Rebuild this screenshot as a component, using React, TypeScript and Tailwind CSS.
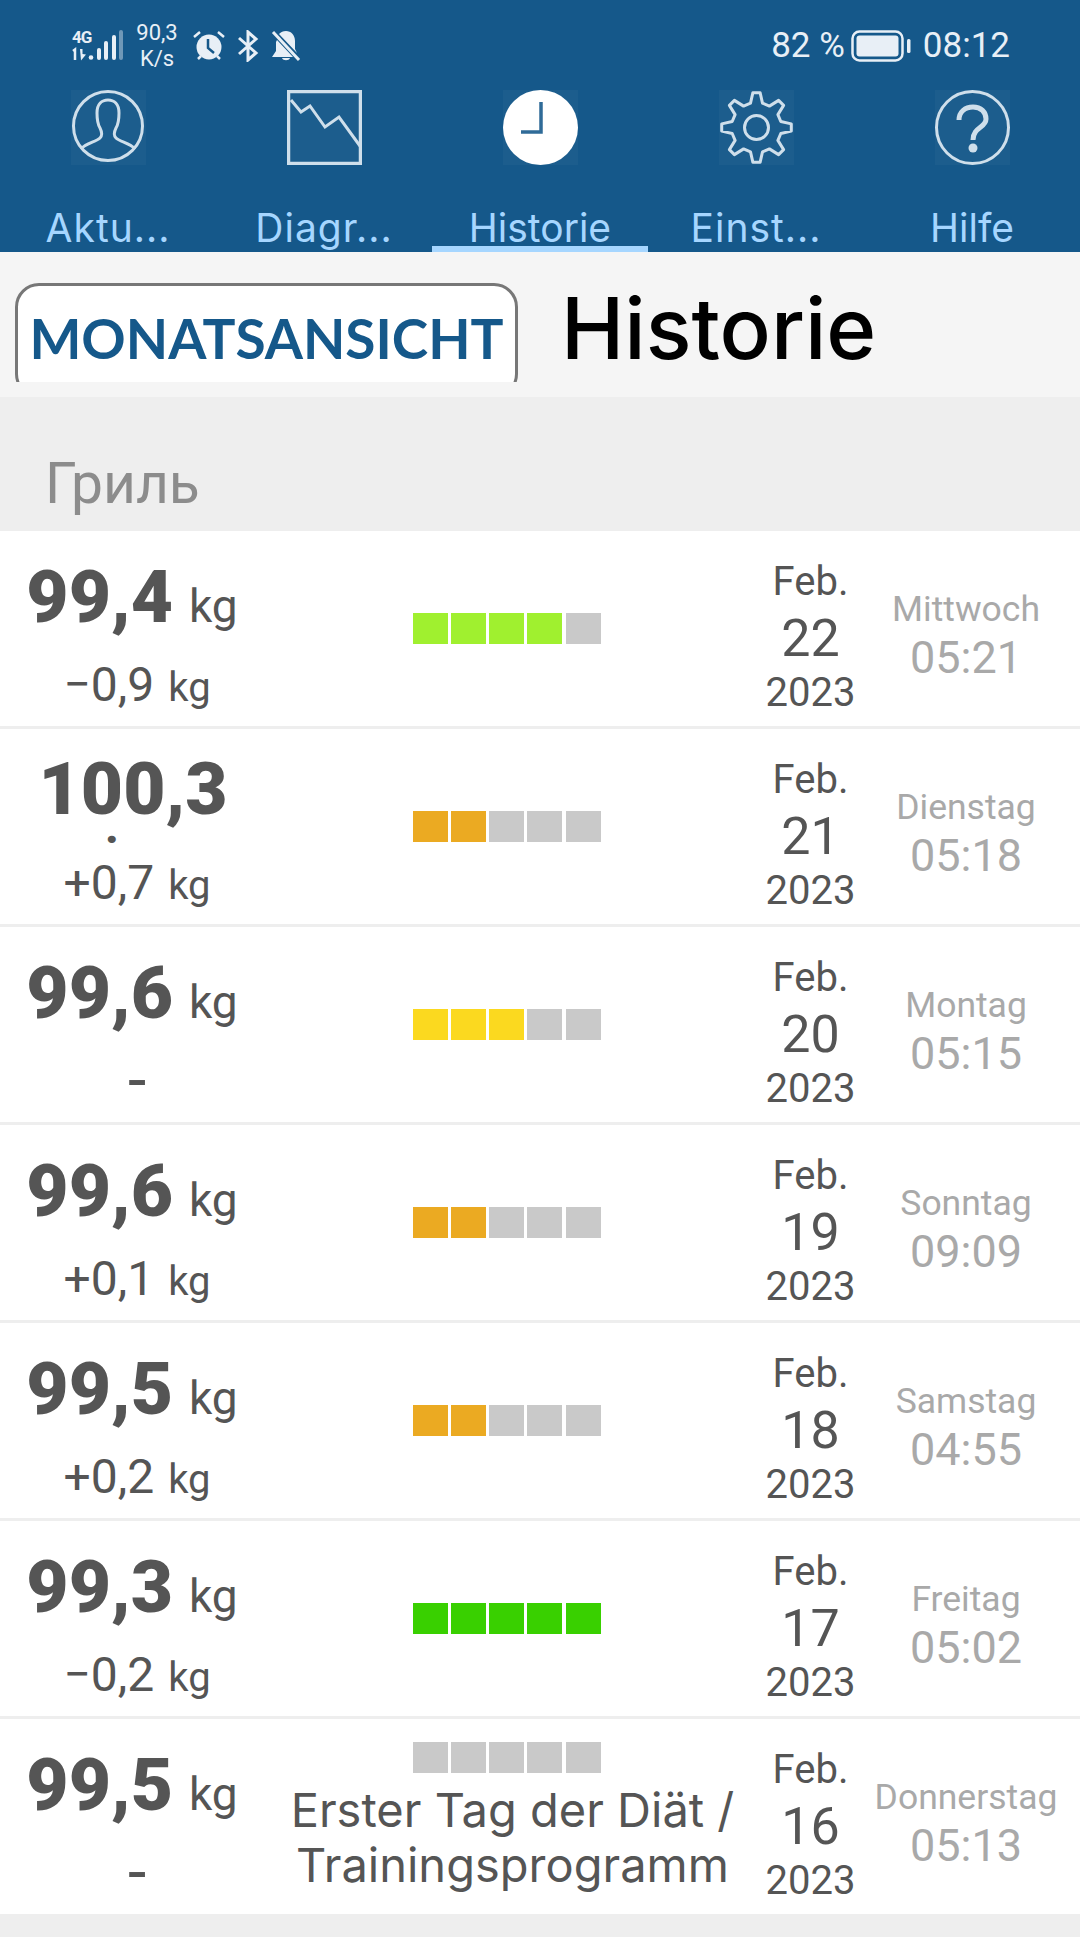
import React from "react";

const font = { fontFamily: "Roboto, 'Noto Sans', sans-serif" };
const inter = { fontFamily: "Inter, sans-serif" };

type Row = {
  value: string;
  delta: string;
  level: number;
  color: string;
  day: string;
  weekday: string;
  time: string;
};

const rows: Row[] = [
  { value: "99,4", delta: "−0,9", level: 4, color: "bg-[#a0f02f]", day: "22", weekday: "Mittwoch", time: "05:21" },
  { value: "100,3", delta: "+0,7", level: 2, color: "bg-[#ebaa22]", day: "21", weekday: "Dienstag", time: "05:18" },
  { value: "99,6", delta: "-", level: 3, color: "bg-[#fbd91f]", day: "20", weekday: "Montag", time: "05:15" },
  { value: "99,6", delta: "+0,1", level: 2, color: "bg-[#ebaa22]", day: "19", weekday: "Sonntag", time: "09:09" },
  { value: "99,5", delta: "+0,2", level: 2, color: "bg-[#ebaa22]", day: "18", weekday: "Samstag", time: "04:55" },
  { value: "99,3", delta: "−0,2", level: 5, color: "bg-[#39d000]", day: "17", weekday: "Freitag", time: "05:02" },
  { value: "99,5", delta: "-", level: 0, color: "bg-[#c9c9c9]", day: "16", weekday: "Donnerstag", time: "05:13" },
];

const gearPath = () => {
  const pts: string[] = [];
  const teeth = 8;
  for (let i = 0; i < teeth; i++) {
    const a = (i / teeth) * Math.PI * 2 - Math.PI / 2;
    const step = Math.PI / teeth;
    const list: [number, number][] = [
      [25, a - step * 0.62],
      [35, a - step * 0.26],
      [35, a + step * 0.26],
      [25, a + step * 0.62],
    ];
    list.forEach(([r, t]) => {
      pts.push(`${(37.5 + r * Math.cos(t)).toFixed(1)} ${(37.5 + r * Math.sin(t)).toFixed(1)}`);
    });
  }
  return "M" + pts.join("L") + "Z";
};

const IconTile = ({ children }: { children: React.ReactNode }) => (
  <div className="w-[75px] h-[75px] bg-white/[0.03]">
    <svg viewBox="0 0 75 75" className="w-full h-full" fill="none" stroke="#cfdfeb" strokeWidth="3">
      {children}
    </svg>
  </div>
);

const tabs = [
  {
    label: "Aktu...",
    icon: (
      <>
        <circle cx="37" cy="36" r="34.5" />
        <path d="M10 59C15 53 25 52 29 48C32 45 31 42 29 38C26 33 26 27 26 23C26 14 31 10 37 10C43 10 48 14 48 23C48 27 48 33 45 38C43 42 42 45 45 48C49 52 59 53 64 59" />
      </>
    ),
  },
  {
    label: "Diagr...",
    icon: (
      <>
        <rect x="1.5" y="1.5" width="72" height="72" strokeWidth="3.5" />
        <path d="M4 10L14 22L23 16L38 37L52 27L73 56" />
      </>
    ),
  },
  {
    label: "Historie",
    active: true,
    icon: (
      <>
        <circle cx="37.5" cy="37.5" r="37.5" fill="#ffffff" stroke="none" />
        <path d="M38 12V42H18" stroke="#2f6b98" strokeWidth="3.5" />
      </>
    ),
  },
  {
    label: "Einst...",
    icon: (
      <>
        <path d={gearPath()} strokeLinejoin="round" />
        <circle cx="37.5" cy="37.5" r="12" />
      </>
    ),
  },
  {
    label: "Hilfe",
    icon: (
      <>
        <circle cx="37.5" cy="37.5" r="36" />
        <path d="M24 30C24 22 30 17 38 17C46 17 51 22 51 29C51 38 38 37 38 50" strokeWidth="5" />
        <circle cx="38" cy="58" r="4.5" fill="#cfdfeb" stroke="none" />
      </>
    ),
  },
];

const StatusBar = () => (
  <div className="h-[90px] flex justify-between text-[#e8eff6] pl-[72px] pr-[70px] pt-[20px]">
    <div className="flex items-start">
      <div className="w-[52px] h-[32px] relative mt-[10px]">
        <span className="absolute left-0 top-0 text-[17px] leading-[14px] font-bold tracking-[-1px]">4G</span>
        <svg viewBox="0 0 52 32" className="absolute left-0 top-0 w-[52px] h-[32px]" fill="#e8eff6">
          <path d="M1 21L3 19.5V30" stroke="#e8eff6" strokeWidth="2.5" fill="none" />
          <path d="M8 19H10.5V24L14 24.5L9 30.5Z" />
          <circle cx="19" cy="27.5" r="2.3" />
          <rect x="25" y="18" width="4" height="12" rx="2" />
          <rect x="32" y="11" width="4" height="19" rx="2" />
          <rect x="40" y="5" width="4" height="25" rx="2" />
          <rect x="47" y="0" width="4" height="30" rx="2" fill="#6f98b8" />
        </svg>
      </div>
      <div className="ml-[11px] w-[44px] flex flex-col items-center text-[22px] leading-[26px]">
        <span>90,3</span>
        <span>K/s</span>
      </div>
      <svg viewBox="0 0 32 32" className="ml-[14px] mt-[10px] w-[32px] h-[32px]" fill="#e8eff6">
        <circle cx="16" cy="17" r="12.5" />
        <path d="M1 7L7 2M31 7L25 2M5 29L8 26M27 29L24 26" stroke="#e8eff6" strokeWidth="2.5" />
        <path d="M15 9V18L21 23" stroke="#15588a" strokeWidth="2.5" fill="none" />
      </svg>
      <svg viewBox="0 0 22 32" className="ml-[12px] mt-[10px] w-[22px] h-[32px]" fill="none" stroke="#e8eff6" strokeWidth="3">
        <path d="M2 8L19 23L11 30V2L19 9L2 24" />
      </svg>
      <svg viewBox="0 0 30 32" className="ml-[12px] mt-[10px] w-[30px] h-[32px]" fill="#e8eff6">
        <path d="M15 1C20 1 24 5 24 11V19L26 23L8 4C10 2 12 1 15 1ZM6 10L22 27H1L5 21V12Z" />
        <path d="M11 28H19C18 31 12 31 11 28Z" />
        <path d="M2 2L28 30" stroke="#e8eff6" strokeWidth="3" />
      </svg>
    </div>
    <div className="flex items-start text-[35px] leading-[52px]">
      <span>82 %</span>
      <svg viewBox="0 0 60 32" className="ml-[6px] mt-[10px] w-[60px] h-[32px]">
        <rect x="1.5" y="1.5" width="50" height="29" rx="7" fill="none" stroke="#e8eff6" strokeWidth="2.5" />
        <rect x="5.5" y="5.5" width="42" height="21" rx="3" fill="#e8eff6" />
        <rect x="56" y="9" width="3.5" height="14" rx="1.5" fill="#e8eff6" />
      </svg>
      <span className="ml-[12px]">08:12</span>
    </div>
  </div>
);

const Header = () => (
  <div className="bg-[#15588a]">
    <StatusBar />
    <div className="grid grid-cols-5">
      {tabs.map((t) => (
        <div key={t.label} className="flex flex-col items-center">
          <IconTile>{t.icon}</IconTile>
          <div
            className={`mt-[43px] h-[38px] text-[39px] leading-[40px] text-[#a6d6ff] whitespace-nowrap ${t.label.endsWith("...") ? "tracking-[1px]" : ""}`}
            style={inter}
          >
            {t.label}
          </div>
          <div className={t.active ? "h-[6px] w-full bg-[#a6d6ff]" : "h-[6px] w-full"} />
        </div>
      ))}
    </div>
  </div>
);

const Bars = ({ level, color }: { level: number; color: string }) => (
  <div className="flex gap-[3.25px] justify-center">
    {[0, 1, 2, 3, 4].map((i) => (
      <div key={i} className={`w-[35px] h-[31px] ${i < level ? color : "bg-[#c9c9c9]"}`} />
    ))}
  </div>
);

const HistoryRow = ({ row, index }: { row: Row; index: number }) => {
  const wrapped = row.value === "100,3";
  const last = index === rows.length - 1;
  const noDelta = row.delta === "-";
  return (
    <div className="h-[195px] bg-white flex text-[#555555]">
      <div className="w-[274px] shrink-0 flex flex-col items-center">
        {wrapped ? (
          <>
            <div className="mt-[25px] pr-[8px] h-[70px] text-[73px] leading-[70px] font-black">{row.value}</div>
            <div className="h-[34px] pr-[50px] text-[44px] leading-[8px] font-black">.</div>
          </>
        ) : (
          <div className="mt-[31px] pr-[10px] h-[70px] leading-[70px] flex items-baseline">
            <span className="text-[73px] font-black">{row.value}</span>
            <span className="ml-[16px] text-[46px]">kg</span>
          </div>
        )}
        <div className={`${wrapped ? "mt-0" : "mt-[28px]"} h-[50px] leading-[50px] flex items-baseline`}>
          <span className={noDelta ? "text-[66px]" : "text-[48px]"}>{row.delta}</span>
          {!noDelta && <span className="ml-[14px] text-[40px]">kg</span>}
        </div>
      </div>

      <div className="w-[465px] shrink-0 flex flex-col justify-center">
        {last ? (
          <div className="flex flex-col items-center h-full pt-[23px]">
            <Bars level={row.level} color={row.color} />
            <div className="mt-[9px] pl-[12px] text-center text-[47px] leading-[55px] whitespace-nowrap" style={inter}>
              Erster Tag der Diät /<br />
              Trainingsprogramm
            </div>
          </div>
        ) : (
          <Bars level={row.level} color={row.color} />
        )}
      </div>

      <div className="w-[143px] shrink-0 flex flex-col items-center pt-[25px] text-[40px]">
        <div className="leading-[52px]">Feb.</div>
        <div className="text-[52px] leading-[62px]">{row.day}</div>
        <div className="leading-[46px]">2023</div>
      </div>

      <div className="w-[198px] shrink-0 pr-[30px] flex flex-col items-center pt-[56px] text-[#a9a9a9]">
        <div className="text-[35.5px] leading-[44px] whitespace-nowrap">{row.weekday}</div>
        <div className="text-[45px] leading-[54px]">{row.time}</div>
      </div>
    </div>
  );
};

export default function App() {
  return (
    <div className="w-[1080px] h-[1937px] overflow-hidden bg-[#eeeeee]" style={font}>
      <Header />

      {/* title bar */}
      <div className="h-[145px] bg-[#f5f5f5] flex items-start pl-[15px]">
        <div className="mt-[31px] w-[503px] h-[99px] shrink-0 overflow-hidden">
          <div className="h-[115px] bg-white border-[3px] border-[#777777] rounded-[24px] flex justify-center pt-[18px]">
            <span className="text-[55px] leading-[68px] font-bold text-[#15588a] whitespace-nowrap" style={{ fontFamily: "Lato, sans-serif" }}>
              MONATSANSICHT
            </span>
          </div>
        </div>
        <div className="ml-[43px] mt-[29px] text-[85px] leading-[96px] font-medium text-black" style={inter}>
          Historie
        </div>
      </div>

      <div className="h-[134px] pl-[45px] pt-[52px] text-[57px] leading-[70px] text-[#8c8c8c]">Гриль</div>

      <div className="flex flex-col gap-[3px]">
        {rows.map((r, i) => (
          <HistoryRow key={r.day} row={r} index={i} />
        ))}
      </div>
    </div>
  );
}
